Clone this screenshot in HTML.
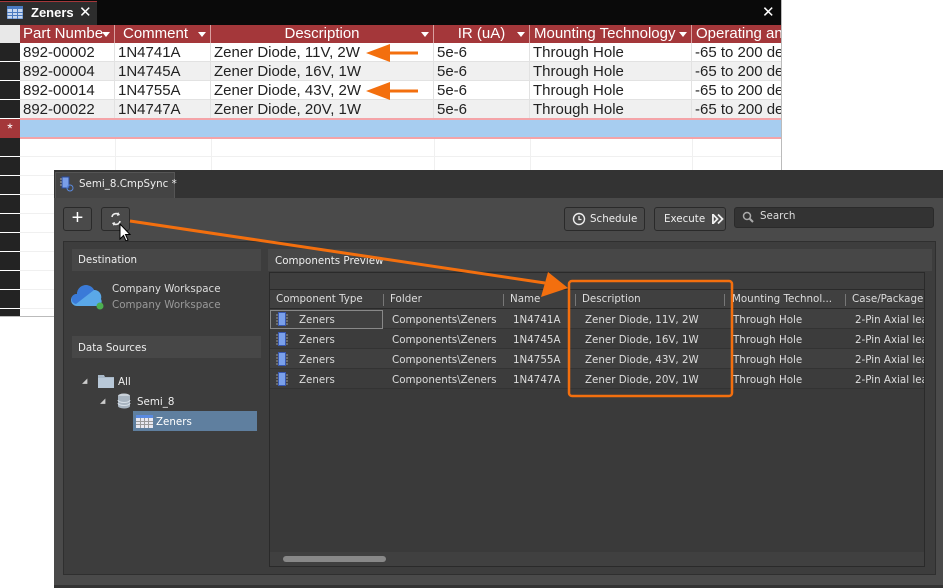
<!DOCTYPE html>
<html><head><meta charset="utf-8"><style>
*{margin:0;padding:0;box-sizing:border-box}
body{width:943px;height:588px;background:#fff;position:relative;overflow:hidden;font-family:"Liberation Sans",sans-serif}
.a{position:absolute}
.acc{left:0;top:0;width:782px;height:317px;background:#fff;border-right:1px solid #bbb;border-bottom:1px solid #bbb;overflow:hidden}
.hd{color:#fff;font-size:15px;line-height:18px;background:#a4373a;top:25px;height:18px;border-right:1px solid #d9a0a0;white-space:nowrap;overflow:hidden}
.cell{font-size:15px;line-height:19px;color:#222;height:19px;border-right:1px solid #e2e2e2;border-bottom:1px solid #e2e2e2;white-space:nowrap;overflow:hidden;padding-left:3px}
.tri{position:absolute;right:4px;top:7px;width:0;height:0;border-left:4px solid transparent;border-right:4px solid transparent;border-top:5px solid #fff}
.dk{font-family:"DejaVu Sans","Liberation Sans",sans-serif;font-size:10.3px;color:#ddd;white-space:nowrap}
.btn{border:1px solid #2a2a2a;border-radius:3px;background:#4a4a4a;height:24px;top:207px}
.row{height:20px;border-bottom:1px solid #333;left:270px;width:654px;overflow:hidden}
.row span{position:absolute;top:5px;white-space:nowrap}
</style></head><body>
<div class="a acc">
 <div class="a" style="left:0;top:0;width:782px;height:25px;background:#0a0a0a"></div>
 <div class="a" style="left:0;top:1px;width:97px;height:24px;background:#2d2d2d;border-top:1px solid #a4373a"></div>
 <svg class="a" style="left:7px;top:6px" width="16" height="13"><rect x="0" y="0" width="16" height="13" fill="#c7d8f0" stroke="#4a7ac0"/><rect x="0" y="0" width="16" height="3" fill="#4a7ac0"/><path d="M0 6.5H16M0 9.5H16M5.5 3V13M10.5 3V13" stroke="#4a7ac0"/></svg>
 <div class="a" style="left:31px;top:5px;color:#fff;font-weight:bold;font-size:13px">Zeners</div>
 <div class="a" style="left:79px;top:3px;color:#fff;font-size:15px">✕</div>
 <div class="a" style="left:762px;top:3px;color:#fff;font-size:15px">✕</div>
 <div class="a" style="left:0;top:25px;width:20px;height:18px;background:#e8e8e8"></div>
 <div class="a" style="left:0;top:43px;width:20px;height:274px;background:repeating-linear-gradient(#232323 0 18px,#fff 18px 19px)"></div>
 <div class="a" style="left:0;top:119px;width:20px;height:19px;background:#a4373a;color:#fff;font-size:14px;text-align:center;line-height:19px">*</div>
 <div class="a" style="left:20px;top:138px;width:762px;height:179px;background:repeating-linear-gradient(#fff 0 18px,#f0f0f0 18px 19px)"></div>
 <div class="a" style="left:115px;top:138px;width:1px;height:179px;background:#f0f0f0"></div>
 <div class="a" style="left:211px;top:138px;width:1px;height:179px;background:#f0f0f0"></div>
 <div class="a" style="left:434px;top:138px;width:1px;height:179px;background:#f0f0f0"></div>
 <div class="a" style="left:530px;top:138px;width:1px;height:179px;background:#f0f0f0"></div>
 <div class="a" style="left:692px;top:138px;width:1px;height:179px;background:#f0f0f0"></div>
 <div class="a hd" style="left:20px;width:95px;padding-left:3px">Part Numbe<i class="tri"></i></div>
 <div class="a hd" style="left:115px;width:96px;padding-left:8px">Comment<i class="tri"></i></div>
 <div class="a hd" style="left:211px;width:223px;text-align:center">Description<i class="tri"></i></div>
 <div class="a hd" style="left:434px;width:96px;text-align:center">IR (uA)<i class="tri"></i></div>
 <div class="a hd" style="left:530px;width:162px;padding-left:4px">Mounting Technology<i class="tri"></i></div>
 <div class="a hd" style="left:692px;width:90px;padding-left:4px">Operating and</div>
 <div id="rows"></div>
 <div class="a" style="left:20px;top:118px;width:762px;height:21px;background:#a7cdf0;border-top:2px solid #f4a4a8;border-bottom:2px solid #f4a4a8"></div>
</div>
<script>
var d=[["892-00002","1N4741A","Zener Diode, 11V, 2W"],["892-00004","1N4745A","Zener Diode, 16V, 1W"],["892-00014","1N4755A","Zener Diode, 43V, 2W"],["892-00022","1N4747A","Zener Diode, 20V, 1W"]];
var cx=[20,115,211,434,530,692],cw=[95,96,223,96,162,90],h="";
d.forEach(function(r,i){var v=r.concat(["5e-6","Through Hole","-65 to 200 de"]);var bg=i%2?"#f0f0f0":"#fff";
for(var j=0;j<6;j++)h+='<div class="a cell" style="left:'+cx[j]+'px;top:'+(43+i*19)+'px;width:'+cw[j]+'px;background:'+bg+'">'+v[j]+'</div>';});
document.getElementById("rows").outerHTML=h;
</script>

<div class="a" style="left:54px;top:170px;width:889px;height:418px;background:#333"></div>
<div class="a" style="left:55px;top:172px;width:120px;height:26px;background:#444;border:1px solid #555;border-bottom:none"></div>
<svg class="a" style="left:60px;top:176px" width="14" height="16"><rect x="2" y="1" width="7" height="11" fill="#7a9ee8" stroke="#2a4a9a"/><path d="M0 3H2M0 6H2M0 9H2" stroke="#aaa"/><circle cx="10" cy="12" r="3" fill="none" stroke="#5a8ae0"/></svg>
<div class="a dk" style="left:79px;top:178px;color:#eee">Semi_8.CmpSync *</div>
<div class="a" style="left:54px;top:198px;width:889px;height:387px;background:#4a4a4a"></div>
<div class="a" style="left:54px;top:585px;width:889px;height:3px;background:#333"></div>
<div class="a btn" style="left:63px;width:29px;color:#fff;font-size:20px;text-align:center;line-height:21px">+</div>
<div class="a btn" style="left:101px;width:29px"></div>
<svg class="a" style="left:108px;top:211px" width="16" height="16"><path d="M4 6a4 4 0 0 1 7-2M12 10a4 4 0 0 1 -7 2" stroke="#eee" stroke-width="1.6" fill="none"/><path d="M10 1l2 3-3 1zM6 15l-2-3 3-1z" fill="#eee"/></svg>
<svg class="a" style="left:119px;top:223px" width="14" height="20"><path d="M1 1V16L4.5 12.5L7 18L9 17L6.5 11.5H11Z" fill="#fff" stroke="#000"/></svg>
<div class="a btn" style="left:564px;width:81px"></div>
<svg class="a" style="left:572px;top:212px" width="14" height="14"><circle cx="7" cy="7" r="5.5" stroke="#eee" stroke-width="1.4" fill="none"/><path d="M7 4V7.5H9.5" stroke="#eee" stroke-width="1.3" fill="none"/></svg>
<div class="a dk" style="left:590px;top:213px;color:#eee">Schedule</div>
<div class="a btn" style="left:654px;width:72px"></div>
<div class="a dk" style="left:664px;top:213px;color:#eee">Execute</div>
<svg class="a" style="left:712px;top:213px" width="12" height="12"><path d="M1 1.5L5.5 6L1 10.5M6 1.5L10.5 6L6 10.5" stroke="#eee" stroke-width="1.8" fill="none"/><rect x="0" y="1" width="1.8" height="10" fill="#eee"/></svg>
<div class="a" style="left:734px;top:207px;width:200px;height:21px;background:#333;border:1px solid #2a2a2a;border-radius:3px"></div>
<svg class="a" style="left:742px;top:211px" width="12" height="12"><circle cx="5" cy="5" r="3.5" stroke="#aaa" stroke-width="1.5" fill="none"/><path d="M7.5 7.5L11 11" stroke="#aaa" stroke-width="2"/></svg>
<div class="a dk" style="left:760px;top:210px;color:#ddd">Search</div>

<div class="a" style="left:63px;top:241px;width:873px;height:334px;background:#3d3d3d;border:1px solid #2f2f2f"></div>
<div class="a" style="left:72px;top:249px;width:189px;height:22px;background:#474747"></div>
<div class="a dk" style="left:78px;top:254px;color:#eee">Destination</div>
<svg class="a" style="left:71px;top:282px" width="34" height="28"><path d="M6 24a6 6 0 0 1 0-12a9 9 0 0 1 17-4a7 7 0 0 1 7 9a5 5 0 0 1 -2 7z" fill="#5aa8e8"/><path d="M5 22a5 5 0 0 1 1-10a9 9 0 0 1 17-4" fill="#3a7ad8"/><circle cx="29" cy="24" r="3.5" fill="#4caf50"/></svg>
<div class="a dk" style="left:112px;top:283px;color:#ddd">Company Workspace</div>
<div class="a dk" style="left:112px;top:299px;color:#999">Company Workspace</div>
<div class="a" style="left:72px;top:336px;width:189px;height:22px;background:#474747"></div>
<div class="a dk" style="left:78px;top:342px;color:#eee">Data Sources</div>
<div class="a" style="left:82px;top:377px;color:#ccc;font-size:7px">◢</div>
<svg class="a" style="left:98px;top:374px" width="17" height="14"><path d="M0 1H6L7 3H16V14H0Z" fill="#a8b8c8"/><rect x="0" y="4" width="16" height="10" fill="#b8c8d8"/></svg>
<div class="a dk" style="left:118px;top:376px;color:#eee">All</div>
<div class="a" style="left:100px;top:397px;color:#ccc;font-size:7px">◢</div>
<svg class="a" style="left:117px;top:393px" width="14" height="16"><ellipse cx="7" cy="3" rx="6" ry="2.5" fill="#c8d0d8"/><rect x="1" y="3" width="12" height="10" fill="#a8b4c0"/><ellipse cx="7" cy="13" rx="6" ry="2.5" fill="#a8b4c0"/><path d="M1 7a6 2.5 0 0 0 12 0M1 10a6 2.5 0 0 0 12 0" stroke="#d8e0e8" fill="none"/></svg>
<div class="a dk" style="left:137px;top:396px;color:#eee">Semi_8</div>
<div class="a" style="left:133px;top:411px;width:124px;height:20px;background:#5f7f9f"></div>
<svg class="a" style="left:136px;top:415px" width="17" height="13"><rect width="17" height="13" fill="#e8e8f0"/><rect width="17" height="3" fill="#5a8ae0"/><path d="M0 6.5H17M0 9.5H17M4.5 3V13M8.5 3V13M12.5 3V13" stroke="#999"/></svg>
<div class="a dk" style="left:156px;top:416px;color:#fff">Zeners</div>

<div class="a" style="left:268px;top:249px;width:664px;height:22px;background:#474747"></div>
<div class="a dk" style="left:275px;top:255px;color:#eee">Components Preview</div>
<div class="a" style="left:269px;top:272px;width:656px;height:295px;background:#3a3a3a;border:1px solid #2a2a2a"></div>
<div class="a" style="left:270px;top:273px;width:654px;height:16px;background:#3e3e3e"></div>
<div class="a" style="left:270px;top:289px;width:654px;height:20px;background:#404040;border-top:1px solid #2a2a2a;border-bottom:1px solid #2a2a2a;overflow:hidden">
<div class="a dk" style="left:6px;top:3px">Component Type</div>
<div class="a" style="left:113px;top:4px;width:1px;height:12px;background:#777"></div>
<div class="a dk" style="left:120px;top:3px">Folder</div>
<div class="a" style="left:233px;top:4px;width:1px;height:12px;background:#777"></div>
<div class="a dk" style="left:240px;top:3px">Name</div>
<div class="a" style="left:305px;top:4px;width:1px;height:12px;background:#777"></div>
<div class="a dk" style="left:312px;top:3px">Description</div>
<div class="a" style="left:454px;top:4px;width:1px;height:12px;background:#777"></div>
<div class="a dk" style="left:462px;top:3px">Mounting Technol...</div>
<div class="a" style="left:575px;top:4px;width:1px;height:12px;background:#777"></div>
<div class="a dk" style="left:582px;top:3px">Case/Package</div>
</div>
<div id="crow"></div>
<div class="a" style="left:270px;top:310px;width:113px;height:19px;border:1px solid #888"></div>
<div class="a" style="left:270px;top:552px;width:654px;height:14px;background:#404040"></div>
<div class="a" style="left:283px;top:556px;width:103px;height:6px;border-radius:3px;background:#888"></div>
<script>
var n=["1N4741A","1N4745A","1N4755A","1N4747A"],ds=["11V, 2W","16V, 1W","43V, 2W","20V, 1W"],s="";
for(var i=0;i<4;i++){s+='<div class="a row dk" style="top:'+(309+i*20)+'px;background:'+(i%2?'#3c3c3c':'#404040')+'">'+
'<svg style="position:absolute;left:6px;top:3px" width="12" height="14"><rect x="2.5" y="0.5" width="7" height="13" fill="#7aa0ea" stroke="#3858b0"/><path d="M0 3H2M0 6H2M0 9H2M0 12H2M10 3H12M10 6H12M10 9H12M10 12H12" stroke="#999"/></svg>'+
'<span style="left:29px">Zeners</span><span style="left:122px">Components\\Zeners</span><span style="left:243px">'+n[i]+'</span><span style="left:315px">Zener Diode, '+ds[i]+'</span><span style="left:463px">Through Hole</span><span style="left:585px">2-Pin Axial lea</span></div>';}
document.getElementById("crow").outerHTML=s;
</script>

<svg class="a" style="left:0;top:0" width="943" height="588">
<path d="M418 53H388" stroke="#f36f0e" stroke-width="3"/><path d="M366 53L390 44L390 62Z" fill="#f36f0e"/>
<path d="M418 91H388" stroke="#f36f0e" stroke-width="3"/><path d="M366 91L390 82L390 100Z" fill="#f36f0e"/>
<path d="M130 221L545 283" stroke="#f36f0e" stroke-width="3"/><path d="M568 288L541 297L548 272Z" fill="#f36f0e"/>
<rect x="569" y="281" width="163" height="115" rx="3" fill="none" stroke="#f36f0e" stroke-width="2.5"/>
</svg>
</body></html>
